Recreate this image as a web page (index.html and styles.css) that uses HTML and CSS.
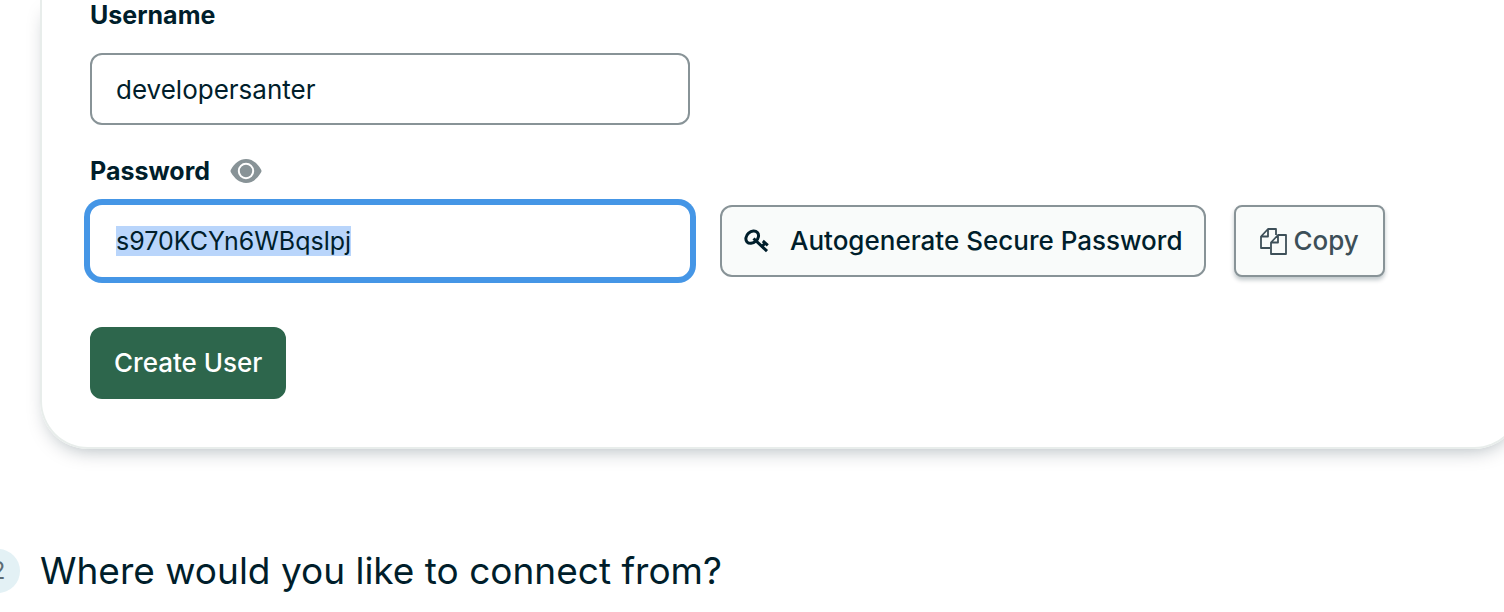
FILE: index.html
```html
<!DOCTYPE html>
<html lang="en">
<head>
<meta charset="utf-8">
<title>Create a database user</title>
<link rel="stylesheet" href="styles.css">
</head>
<body>
<main class="page">
  <form class="card">
    <div class="field">
      <label class="label" for="username">Username</label>
      <input class="input" id="username" type="text" value="developersanter" autocomplete="off" spellcheck="false">
    </div>
    <div class="field field-password">
      <div class="label-row">
        <label class="label" for="password">Password</label>
        <button class="reveal" type="button" aria-label="Hide password">
          <svg class="eye" viewBox="0 0 32 24" aria-hidden="true">
            <path d="M1 10.400C4.500 4.500 9.500 0 16 0s11.500 4.500 15 10.400q1 1.600 0 3.200C27.500 19.500 22.500 24 16 24S4.500 19.500 1 13.600q-1-1.600 0-3.200z" fill="#889397"/>
            <circle cx="16" cy="12" r="7.200" fill="none" stroke="#fff" stroke-width="2"/>
          </svg>
        </button>
      </div>
      <div class="input-row">
        <input class="input input-active" id="password" type="text" value="s970KCYn6WBqslpj" autocomplete="off" spellcheck="false">
        <button class="button button-generate" type="button">
          <svg class="key" viewBox="0 0 26 24" aria-hidden="true" fill="none" stroke="#001e2b">
            <ellipse cx="8.200" cy="8.200" rx="7" ry="5.400" transform="rotate(-42 8.200 8.200)" stroke-width="3"/>
            <path d="M9.500 9.500 23 22.200M18 17.300l3.200-3.200M18.800 12l5 4.300" stroke-width="3"/>
          </svg>
          Autogenerate Secure Password
        </button>
        <button class="button button-copy" type="button">
          <svg class="copy" viewBox="0 0 27 27" aria-hidden="true" fill="none" stroke="#3d4f58" stroke-width="1.800" stroke-linejoin="round">
            <path d="M10 20H1V8.500L8 1h8v6M8 1v7.500H1"/>
            <path d="M18 7h8v19H11V14.500zM18 7v7.500h-7"/>
          </svg>
          Copy
        </button>
      </div>
    </div>
    <button class="button button-create" type="submit">Create User</button>
  </form>
  <section class="step">
    <span class="step-number">2</span>
    <h2 class="step-title">Where would you like to connect from?</h2>
  </section>
</main>
<script src="app.js"></script>
</body>
</html>
```

FILE: styles.css
```css
* {
  box-sizing: border-box;
}

body {
  margin: 0;
  background: #fff;
  color: #001e2b;
  font-family: Inter, "Liberation Sans", sans-serif;
  font-size: 26px;
  line-height: 32px;
  overflow: hidden;
}

.page {
  margin-right: -18px;
}

.card {
  margin-left: 40px;
  padding: 0 48px 48px;
  border: 2px solid #e8edeb;
  border-top: 0;
  border-radius: 0 0 48px 48px;
  box-shadow: 0 8px 20px -8px rgba(0, 30, 43, 0.35);
}

.label {
  display: block;
  font-size: 25px;
  font-weight: 700;
}

.input {
  display: block;
  width: 600px;
  height: 72px;
  margin: 0;
  padding: 0 24px;
  border: 2px solid #889397;
  border-radius: 12px;
  outline: 0;
  background: #fff;
  color: inherit;
  font: inherit;
}

.field > .label {
  line-height: 30px;
}

.field .label + .input {
  margin-top: 23px;
}

.input-active {
  border-color: #fff;
  box-shadow: 0 0 0 6px #4596e6;
  font-size: 25px;
}

.input::selection {
  background: #b9d5fb;
  color: #001e2b;
}

.field-password {
  margin-top: 30px;
}

.label-row {
  display: flex;
  align-items: center;
  gap: 20px;
}

.reveal {
  display: flex;
  padding: 0;
  border: 0;
  background: none;
}

.eye {
  width: 32px;
  height: 24px;
}

.input-row {
  display: flex;
  margin-top: 18px;
}

.button {
  display: flex;
  align-items: center;
  height: 72px;
  padding: 0 22px;
  border: 2px solid #889397;
  border-radius: 12px;
  background: #f9fbfa;
  color: #001e2b;
  font: inherit;
  font-weight: 500;
  white-space: nowrap;
}

.button-generate {
  gap: 20px;
  margin-left: 30px;
}

.button-copy {
  gap: 6px;
  margin-left: 28px;
  padding: 0 24px;
  border-radius: 8px;
  color: #3d4f58;
  box-shadow: 0 3px 4px rgba(0, 30, 43, 0.25);
}

.button-create {
  margin-top: 50px;
  border-color: #2d664c;
  background: #2d664c;
  color: #fff;
}

.key {
  width: 26px;
  height: 24px;
}

.copy {
  width: 27px;
  height: 27px;
}

.step {
  display: flex;
  align-items: center;
  gap: 20px;
  margin: 100px 0 0 -24px;
}

.step-number {
  flex: none;
  width: 44px;
  height: 44px;
  border-radius: 50%;
  background: #e3f1f5;
  color: #5c6c75;
  font-size: 24px;
  line-height: 44px;
  text-align: center;
}

.step-title {
  margin: 0;
  font-size: 37px;
  font-weight: 400;
  line-height: 44px;
}
```

FILE: app.js
```js
const password = document.getElementById('password');
password.focus();
password.select();
```
